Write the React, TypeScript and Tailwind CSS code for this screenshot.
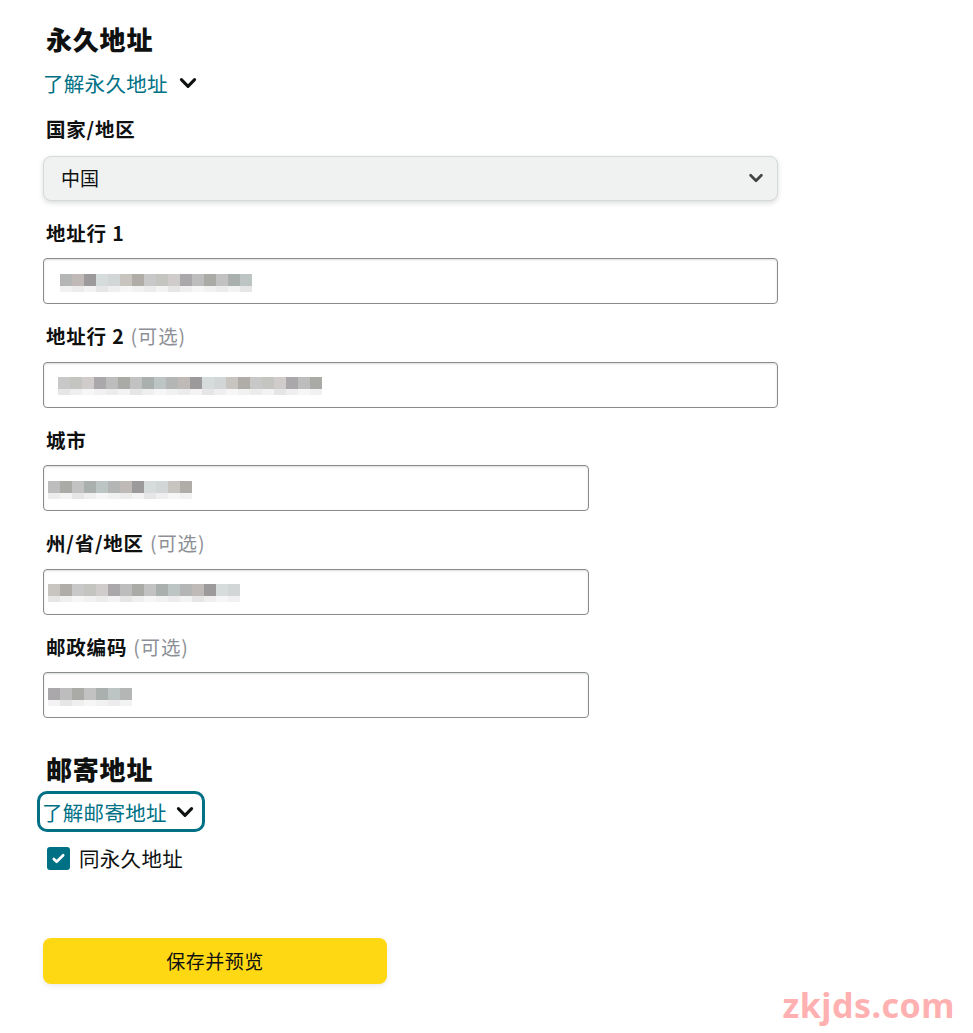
import React from "react";

const FONT = { fontFamily: '"Noto Sans CJK SC", "Liberation Sans", sans-serif' };

const GREYS = [
  "#b4b6b6", "#c2c2c2", "#aaa8aa", "#c8c8c8", "#d2d6d6", "#bfbab8", "#a9b0ae", "#bdbdbd",
  "#c4c4c0", "#c8c4c0", "#9c9a9a", "#bcc4c4", "#aaaaa6", "#d0cccc", "#b0aca8", "#d6dcdc",
];
const LIGHT = ["#f1f1f1", "#ececec", "#f3f3f3", "#e6e6e6", "#efefef", "#f6f6f6"];

function Mosaic({ count, offset = 0 }: { count: number; offset?: number }) {
  const cells = Array.from({ length: count }, (_, i) => i);
  return (
    <div className="flex flex-col">
      <div className="flex">
        {cells.map((i) => (
          <div
            key={i}
            className="h-[12px] w-[12px]"
            style={{ background: GREYS[(i * 5 + offset) % GREYS.length] }}
          />
        ))}
      </div>
      <div className="flex">
        {cells.map((i) => (
          <div
            key={i}
            className="h-[6px] w-[12px]"
            style={{ background: LIGHT[(i + offset) % LIGHT.length] }}
          />
        ))}
      </div>
    </div>
  );
}

function Chevron({ className = "", width = 2.6 }: { className?: string; width?: number }) {
  return (
    <svg viewBox="0 0 20 20" className={className} fill="none">
      <path d="M4 7l6 6 6-6" stroke="currentColor" strokeWidth={width} strokeLinecap="round" strokeLinejoin="round" />
    </svg>
  );
}

function Label({ text, optional }: { text: string; optional?: boolean }) {
  return (
    <div className="pl-[3px] text-[19.5px] leading-[24.5px] font-bold tracking-[0.8px] text-[#0f1111]">
      {text}
      {optional && <span className="ml-[6px] font-normal text-[#8d9096]">(可选)</span>}
    </div>
  );
}

function TextField({
  label,
  optional,
  wide,
  cells,
  offset,
  indent = 16,
}: {
  label: string;
  optional?: boolean;
  wide?: boolean;
  cells: number;
  offset: number;
  indent?: number;
}) {
  return (
    <div className="flex flex-col gap-[13px]">
      <Label text={label} optional={optional} />
      <div
        className={`flex h-[46px] items-center rounded-[4px] border border-[#888c8c] bg-white shadow-[inset_0_1px_2px_rgba(15,17,17,0.15)] ${
          wide ? "w-[735px]" : "w-[546px]"
        }`}
      >
        <div className="pt-[3px]" style={{ marginLeft: indent }}>
          <Mosaic count={cells} offset={offset} />
        </div>
      </div>
    </div>
  );
}

export default function App() {
  return (
    <div className="relative min-h-[1033px] bg-white text-[#0f1111]" style={FONT}>
      <div className="flex flex-col pl-[43px] pt-[22px]">
        <h2 className="pl-[3px] text-[26px] leading-[34px] font-black tracking-[0.8px]">永久地址</h2>
        <button className="mt-[13px] flex w-fit items-center gap-[9px] text-[20.5px] leading-[28px] tracking-[0.3px] text-[#007185]">
          了解永久地址
          <Chevron className="h-[22px] w-[22px] text-[#0f1111]" width={2.8} />
        </button>

        <div className="mt-[20px] flex flex-col gap-[14px]">
          <Label text="国家/地区" />
          <div className="flex h-[45px] w-[735px] items-center justify-between rounded-[8px] border border-[#d5d9d9] bg-[#f0f2f2] pl-[17px] pr-[12px] shadow-[0_2px_5px_rgba(15,17,17,0.15)]">
            <span className="text-[19px]">中国</span>
            <Chevron className="h-[18px] w-[18px] text-[#444]" width={3} />
          </div>
        </div>

        <div className="mt-[20px] flex flex-col gap-[20px]">
          <TextField label="地址行 1" wide cells={16} offset={0} indent={16} />
          <TextField label="地址行 2" optional wide cells={22} offset={3} indent={14} />
          <TextField label="城市" cells={12} offset={7} indent={4} />
          <TextField label="州/省/地区" optional cells={16} offset={9} indent={4} />
          <TextField label="邮政编码" optional cells={7} offset={2} indent={4} />
        </div>

        <h2 className="mt-[34px] pl-[3px] text-[26px] leading-[34px] font-black tracking-[0.8px]">邮寄地址</h2>
        <button className="-ml-[6px] mt-[5px] flex h-[41px] w-fit items-center gap-[7px] rounded-[10px] border-[3px] border-[#007185] pl-[2px] pr-[6px] text-[20.5px] leading-[34px] tracking-[0.3px] text-[#007185]">
          了解邮寄地址
          <Chevron className="h-[22px] w-[22px] text-[#0f1111]" width={2.8} />
        </button>

        <label className="ml-[4px] mt-[12px] flex items-center gap-[9px] text-[20.5px] leading-[28px] tracking-[0.3px]">
          <span className="flex h-[23px] w-[23px] items-center justify-center rounded-[3px] bg-[#007185]">
            <svg viewBox="0 0 16 16" className="h-[15px] w-[15px]" fill="none">
              <path d="M3 8.5l3 3 7-7" stroke="white" strokeWidth="2.8" strokeLinecap="round" strokeLinejoin="round" />
            </svg>
          </span>
          同永久地址
        </label>

        <button className="mt-[66px] h-[46px] w-[344px] rounded-[8px] bg-[#ffd814] text-[19px] tracking-[0.5px] text-[#0f1111] shadow-[0_2px_5px_rgba(213,217,217,0.5)]">
          保存并预览
        </button>
      </div>

      <div
        className="absolute right-[18px] top-[980px] text-[34px] font-bold tracking-[0.5px] text-[#ffb0b0]"
        style={{ fontFamily: '"Noto Sans", sans-serif' }}
      >
        zkjds.com
      </div>
    </div>
  );
}
